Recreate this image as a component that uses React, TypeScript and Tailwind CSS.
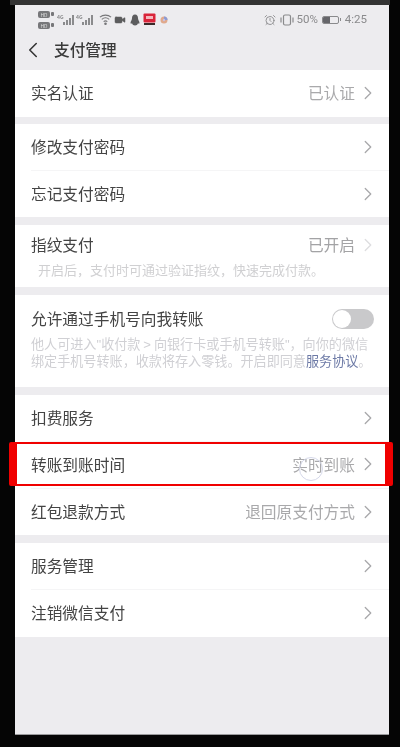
import { ChevronLeft, ChevronRight, AlarmClock, Video } from "lucide-react";

const Row = ({ title, value, last }: { title: string; value?: string; last?: boolean }) => (
  <div className="flex h-[47px] items-center pl-4">
    <div className={`flex h-full flex-1 items-center justify-between pb-[1px] pr-[10px] ${last ? "" : "border-b border-[#f5f5f6]"}`}>
      <span className="text-[15.7px] text-[#444]">{title}</span>
      <div className="flex items-center">
        {value && <span className="text-[15.7px] text-[#a9a9ab]">{value}</span>}
        <ChevronRight className="ml-[2px] h-[22px] w-[22px] text-[#a8a8aa]" strokeWidth={1.4} />
      </div>
    </div>
  </div>
);

const Signal = () => (
  <svg width="19" height="12" viewBox="0 0 19 12" className="text-[#8b8b8d]" fill="currentColor">
    <text x="0" y="5" fontSize="5" fontWeight="700">
      4G
    </text>
    <rect x="6" y="8" width="2" height="3" />
    <rect x="9" y="6" width="2" height="5" />
    <rect x="12" y="4" width="2" height="7" />
    <rect x="15" y="1" width="2" height="10" />
  </svg>
);

const Hd = () => (
  <div className="flex items-center gap-[1px]">
    <span className="flex h-[7px] w-[12px] items-center justify-center rounded-[2px] bg-[#77777a] text-[5px] leading-none text-[#ddd]">HD</span>
    <span className="h-[4px] w-[3px] rounded-[1px] bg-[#77777a]" />
  </div>
);

const StatusBar = () => (
  <div className="flex h-[27px] items-center justify-between pl-[23px] pr-[22px] pt-[2px] blur-[0.3px]">
    <div className="flex items-center">
      <div className="flex flex-col gap-[4px]">
        <Hd />
        <Hd />
      </div>
      <div className="ml-[3px] flex items-center">
        <Signal />
        <Signal />
      </div>
      <svg width="13" height="13" viewBox="0 0 14 13" fill="none" stroke="#77777a" strokeWidth="1.2" className="ml-[4px]">
        <path d="M1 4c3.4-3 8.6-3 12 0M3 6.4c2.3-2 5.7-2 8 0M5 8.8c1.2-1 2.8-1 4 0" />
        <circle cx="7" cy="11" r="0.8" fill="#77777a" />
      </svg>
      <Video className="ml-[2px] h-[12px] w-[12px] text-[#5c5c5e]" fill="#5c5c5e" strokeWidth={1} />
      <svg width="10" height="12" viewBox="0 0 10 12" fill="#5c5c5e" className="ml-[4px]">
        <path d="M5 0.5C2.8 0.5 2 2.3 2 4.3C2 6 0.5 7.5 0.5 9C0.5 10 1.5 9.8 2 9.3C2.5 10.8 3.5 11.5 5 11.5C6.5 11.5 7.5 10.8 8 9.3C8.5 9.8 9.5 10 9.5 9C9.5 7.5 8 6 8 4.3C8 2.3 7.2 0.5 5 0.5Z" />
      </svg>
      <svg width="13" height="13" viewBox="0 0 13 13" className="ml-[3px]">
        <rect x="0.5" y="0.5" width="12" height="9" rx="1" fill="#d9243a" />
        <rect x="3" y="3" width="7" height="3" fill="#f4b7bd" />
        <rect x="1" y="10" width="11" height="2" fill="#3a2a2a" />
      </svg>
      <svg width="8" height="8" viewBox="0 0 8 8" className="ml-[4px]">
        <circle cx="4" cy="4" r="3.5" fill="#e0a98c" />
        <path d="M4 4V0.5A3.5 3.5 0 0 1 7.5 4Z" fill="#8a9bd6" />
        <circle cx="4" cy="4" r="1.2" fill="#c9c2e2" />
      </svg>
    </div>
    <div className="flex items-center text-[#8a8a8c]">
      <AlarmClock className="h-[12px] w-[12px]" strokeWidth={1.8} />
      <svg width="14" height="12" viewBox="0 0 14 12" fill="none" stroke="currentColor" strokeWidth="1.2" className="ml-[4px]">
        <rect x="3.5" y="1" width="7" height="10" rx="1.5" />
        <path d="M1 3.5v5M13 3.5v5" />
      </svg>
      <span className="ml-[2px] font-['Roboto',sans-serif] text-[11.5px] leading-none">50%</span>
      <div className="ml-[4px] flex items-center">
        <div className="h-[8px] w-[17px] overflow-hidden rounded-[2px] border border-[#8a8a8c]">
          <div className="h-full w-1/2 bg-[#66666a]" />
        </div>
        <div className="ml-[1px] h-[3px] w-[1px] bg-[#8a8a8c]" />
      </div>
      <span className="ml-[4px] font-['Roboto',sans-serif] text-[11.5px] leading-none">4:25</span>
    </div>
  </div>
);

export default function App() {
  return (
    <div className="relative flex h-[747px] w-[400px] flex-col overflow-hidden bg-[#050505] pb-[12px] pl-[15px] pr-[11px] pt-[5px] font-['Noto_Sans_CJK_SC','Noto_Sans',sans-serif] blur-[0.4px]">
      <div className="absolute left-[10px] right-[10px] top-0 h-[5px] bg-[#333]" />
      <div className="relative flex flex-1 flex-col gap-2 bg-[#edecef]">
        <div className="-mb-2">
          <StatusBar />
          <div className="flex h-[38px] items-center pb-[2px] pl-[5px]">
            <ChevronLeft className="h-[26px] w-[26px] text-[#333]" strokeWidth={1.4} />
            <span className="ml-[8px] text-[15.7px] font-medium text-[#3a3a3a]">支付管理</span>
          </div>
        </div>

        <div className="-mb-px bg-white">
          <Row title="实名认证" value="已认证" last />
        </div>

        <div className="h-[93px] overflow-hidden bg-white">
          <Row title="修改支付密码" />
          <Row title="忘记支付密码" last />
        </div>

        <div className="bg-white">
          <div className="flex h-[37px] items-center justify-between pl-4 pr-[10px] pt-[3px]">
            <span className="text-[15.7px] text-[#444]">指纹支付</span>
            <div className="flex items-center">
              <span className="text-[15.7px] text-[#a3a3a5]">已开启</span>
              <ChevronRight className="ml-[2px] h-[22px] w-[22px] text-[#dddddf]" strokeWidth={1.4} />
            </div>
          </div>
          <p className="h-[25px] pl-[23px] text-[13px] leading-[16px] text-[#d0d0d2]">开启后，支付时可通过验证指纹，快速完成付款。</p>
        </div>

        <div className="bg-white">
          <div className="flex h-[41px] items-center justify-between pl-4 pr-[15px] pt-[7px]">
            <span className="text-[15.7px] text-[#444]">允许通过手机号向我转账</span>
            <div className="flex h-[20px] w-[42px] items-center rounded-full bg-[#c9c9cb] pl-[1px]">
              <div className="h-[18px] w-[18px] rounded-full bg-white" />
            </div>
          </div>
          <p className="h-[51px] whitespace-nowrap pl-4 text-[13.1px] leading-[16px] text-[#d0d0d4]">
            他人可进入<span className="font-['Liberation_Sans',sans-serif]">"</span>收付款 <span className="font-['Liberation_Sans',sans-serif]">&gt;</span> 向银行卡或手机号转账<span className="font-['Liberation_Sans',sans-serif]">"</span>，向你的微信
            <br />
            绑定手机号转账，收款将存入零钱。开启即同意<span className="text-[#6d7aa6]">服务协议</span>。
          </p>
        </div>

        <div className="h-[140px] overflow-hidden bg-white">
          <Row title="扣费服务" />
          <Row title="转账到账时间" value="实时到账" />
          <Row title="红包退款方式" value="退回原支付方式" last />
        </div>

        <div className="bg-white">
          <Row title="服务管理" />
          <Row title="注销微信支付" last />
        </div>

        <div className="absolute bottom-0 left-0 right-0 h-[1px] bg-[#9a9a9c]" />
      </div>

      {/* red highlight over the row */}
      <div className="absolute left-[9px] top-[442px] h-[44px] w-[384px] rounded-[2px] border-x-[8px] border-y-[2px] border-[#f00000]" />
      {/* touch indicator */}
      <div className="absolute left-[299px] top-[457px] h-[24px] w-[24px] rounded-full border border-[#d5d8ea]" />
    </div>
  );
}
